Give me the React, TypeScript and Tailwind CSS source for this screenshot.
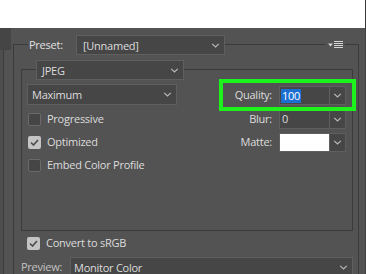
import React from 'react';

const line = 'border-[#3b3b3b]';

const Chevron: React.FC = () => (
  <svg width="9" height="5" viewBox="0 0 9 5" className="shrink-0">
    <polyline points="1.2,0.9 4.5,4 7.8,0.9" fill="none" stroke="#b8b8b8" strokeWidth="1.2" />
  </svg>
);

const Dropdown: React.FC<{ label: string; className?: string }> = ({ label, className = '' }) => (
  <div
    className={`flex items-center justify-between border border-[#5f5f5f] bg-[#464646] pr-[4px] text-[#dcdcdc] ${className}`}
  >
    <span className="leading-none">{label}</span>
    <Chevron />
  </div>
);

const Checkbox: React.FC<{ checked?: boolean; label: string }> = ({ checked, label }) => (
  <div className="flex items-center gap-[6px]">
    {checked ? (
      <div className="flex h-[13px] w-[13px] items-center justify-center rounded-[2px] bg-[#c4c4c4]">
        <svg width="9" height="7" viewBox="0 0 9 7">
          <polyline points="1,3.5 3.5,6 8,1" fill="none" stroke="#4a4a4a" strokeWidth="1.6" />
        </svg>
      </div>
    ) : (
      <div className="h-[13px] w-[13px] rounded-[2px] border border-[#6a6a6a] bg-[#454545]" />
    )}
    <span className="text-[#dcdcdc]">{label}</span>
  </div>
);

const ComboField: React.FC<{ children?: React.ReactNode; white?: boolean }> = ({ children, white }) => (
  <div className="flex h-[19px] w-[67px] border border-[#5f5f5f] bg-[#464646]">
    <div className={`flex flex-1 items-center pl-[1px] ${white ? 'bg-white' : ''}`}>{children}</div>
    <div className="flex w-[16px] items-center justify-center border-l border-[#5f5f5f]">
      <Chevron />
    </div>
  </div>
);

const MenuIcon: React.FC = () => (
  <svg width="15" height="8" viewBox="0 0 15 8" className="mx-[2px] shrink-0">
    <polygon points="0,2.5 5,2.5 2.5,5.5" fill="#d4d4d4" />
    <rect x="6" y="0" width="9" height="1" fill="#d4d4d4" />
    <rect x="6" y="2" width="9" height="1" fill="#d4d4d4" />
    <rect x="6" y="4" width="9" height="1" fill="#d4d4d4" />
    <rect x="6" y="6" width="9" height="1" fill="#d4d4d4" />
  </svg>
);

const App: React.FC = () => {
  return (
    <div
      className="flex h-[274px] w-[366px] flex-col overflow-hidden bg-[#535353] text-[11px] tracking-[-0.25px] text-[#dcdcdc]"
      style={{ fontFamily: '"Segoe UI", "Open Sans", "Noto Sans", sans-serif' }}
    >
      {/* white strip above the panel */}
      <div className="flex h-[28px] shrink-0 justify-end bg-white">
        <div className="w-px bg-[#3a3a3a]" />
      </div>

      <div className="flex flex-1">
        {/* edge of the neighbouring panel */}
        <div className="flex w-[13px] flex-col">
          <div className="h-[22px] w-[11px] bg-[#454545]" />
          <div className={`w-[4px] flex-1 border-r ${line} bg-[#4e4e4e]`} />
        </div>

        {/* outer group: preset */}
        <div className="flex w-[346px] flex-col pt-[7px]">
          <div className="flex h-[20px] items-center">
            <div className={`h-[11px] w-[15px] self-end border-l border-t ${line}`} />
            <span className="ml-[1px] w-[47px] text-[#e0e0e0]">Preset:</span>
            <Dropdown label="[Unnamed]" className="h-[20px] w-[149px] pl-[6px]" />
            <div className={`h-[11px] flex-1 self-end border-t ${line}`} />
            <MenuIcon />
            <div className={`h-[11px] w-[14px] self-end border-r border-t ${line}`} />
          </div>

          <div className={`flex flex-1 flex-col border-l border-r ${line}`}>
            {/* inner group: format */}
            <div className="ml-[7px] mr-[5px] mt-[5px] flex flex-col">
              <div className="flex h-[20px] items-center">
                <div className={`h-[11px] w-[15px] self-end border-l border-t ${line}`} />
                <Dropdown label="JPEG" className="h-[20px] w-[148px] pl-[5px]" />
                <div className={`h-[11px] flex-1 self-end border-r border-t ${line}`} />
              </div>

              <div className={`flex h-[151px] flex-col border-b border-l border-r pl-[5px] pr-[6px] ${line}`}>
                <div className="relative mt-[4px] flex h-[21px] items-end justify-between">
                  <Dropdown label="Maximum" className="h-[21px] w-[150px] self-stretch pl-[4px]" />
                  <div className="flex items-center gap-[7px]">
                    <span>Quality:</span>
                    <ComboField>
                      <span className="bg-[#1b6fd2] px-[1px] leading-[14px] text-white">100</span>
                    </ComboField>
                  </div>
                  {/* highlight drawn over the quality field */}
                  <div className="absolute -bottom-[6px] -right-[10px] -top-[5px] left-[192px] border-4 border-[#1cf21c]" />
                </div>

                <div className="mt-[3px] flex h-[23px] items-center justify-between">
                  <div className="ml-[1px]">
                    <Checkbox label="Progressive" />
                  </div>
                  <div className="flex items-center gap-[7px]">
                    <span>Blur:</span>
                    <ComboField>
                      <span className="pl-[1px]">0</span>
                    </ComboField>
                  </div>
                </div>

                <div className="flex h-[23px] items-center justify-between">
                  <div className="ml-[1px]">
                    <Checkbox checked label="Optimized" />
                  </div>
                  <div className="flex items-center gap-[7px]">
                    <span>Matte:</span>
                    <ComboField white />
                  </div>
                </div>

                <div className="flex h-[22px] items-center">
                  <div className="ml-[1px]">
                    <Checkbox label="Embed Color Profile" />
                  </div>
                </div>
              </div>
            </div>

            <div className="ml-[13px] mt-[6px] flex h-[13px] items-center">
              <Checkbox checked label="Convert to sRGB" />
            </div>

            <div className="ml-[7px] mr-[5px] mt-[7px] flex h-[21px] items-center">
              <span className="w-[49px] text-[#c2c2c2]">Preview:</span>
              <Dropdown label="Monitor Color" className="h-[21px] flex-1 pl-[3px]" />
            </div>
          </div>
        </div>

        <div className="flex flex-1 justify-end">
          <div className="w-px bg-[#3f3f3f]" />
        </div>
      </div>
    </div>
  );
};

export default App;
